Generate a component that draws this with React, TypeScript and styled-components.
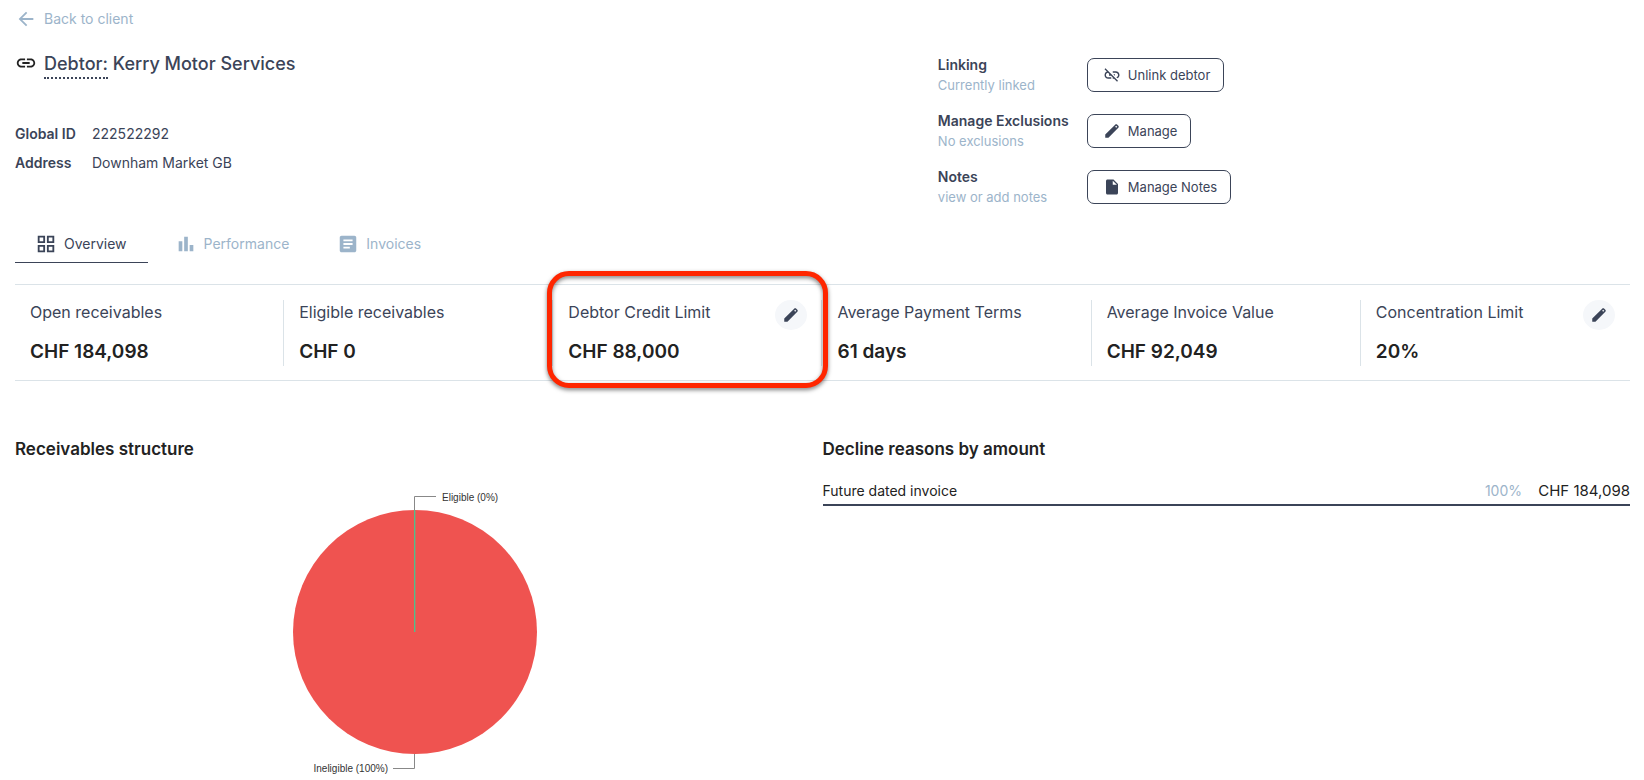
import React from 'react';
import styled, { createGlobalStyle, css } from 'styled-components';
import {
  MdArrowBack,
  MdArticle,
  MdBarChart,
  MdGridView,
  MdInsertDriveFile,
  MdLink,
  MdLinkOff,
} from 'react-icons/md';

const colors = {
  ink: '#3b4458',
  strong: '#222222',
  muted: '#9cb4ca',
  line: '#dbe3e8',
  soft: '#f5f7fa',
  highlight: '#ff2600',
  danger: '#ef5350',
};

const GlobalStyle = createGlobalStyle`
  * { box-sizing: border-box; }
  body {
    margin: 0;
    background: #ffffff;
    color: ${colors.ink};
    font-family: Inter, "Liberation Sans", sans-serif;
    font-size: 14px;
    line-height: 20px;
  }
  button { font: inherit; color: inherit; cursor: pointer; }
  h1, h2, p, dl, dd, dt { margin: 0; }
`;

const Page = styled.div`
  padding: 8px 14px 0 15px;
`;

const BackLink = styled.a`
  display: flex;
  align-items: center;
  gap: 7px;
  width: fit-content;
  color: ${colors.muted};
  text-decoration: none;
  svg { width: 22px; height: 22px; }
`;

const Header = styled.header`
  display: grid;
  grid-template-columns: 4fr 3fr;
  margin-top: 20px;
`;

const Title = styled.h1`
  display: flex;
  align-items: flex-start;
  gap: 7px;
  padding-top: 2px;
  font-size: 18px;
  line-height: 24px;
  font-weight: 500;
  svg { width: 22px; height: 22px; color: ${colors.strong}; }
`;

const TitleTerm = styled.span`
  display: inline-block;
  padding-bottom: 1px;
  border-bottom: 2px dotted ${colors.ink};
`;

const Details = styled.dl`
  display: grid;
  grid-template-columns: 62px 1fr;
  column-gap: 15px;
  row-gap: 9px;
  margin-top: 45px;
  white-space: nowrap;
  dt { font-weight: 600; }
`;

const Actions = styled.div`
  display: grid;
  grid-template-columns: 135px max-content;
  column-gap: 14px;
  row-gap: 14px;
  align-content: start;
  align-items: center;
  padding-top: 4px;
`;

const ActionText = styled.div`
  display: flex;
  flex-direction: column;
  height: 42px;
`;

const ActionName = styled.span`
  font-weight: 600;
  line-height: 22px;
`;

const ActionHint = styled.span`
  font-size: 13px;
  line-height: 18px;
  color: ${colors.muted};
`;

const OutlineButton = styled.button`
  display: inline-flex;
  align-items: center;
  justify-self: start;
  gap: 7px;
  height: 34px;
  padding: 0 13px 0 15px;
  border: 1px solid ${colors.ink};
  border-radius: 7px;
  background: #ffffff;
  font-size: 13px;
  svg { width: 18px; height: 18px; }
`;

const Tabs = styled.nav`
  display: flex;
  gap: 7px;
  margin-top: 17px;
`;

const Tab = styled.button<{ $active?: boolean }>`
  display: flex;
  align-items: center;
  gap: 7px;
  height: 38px;
  padding: 0 21px 0 20px;
  border: 0;
  border-bottom: 1px solid transparent;
  background: none;
  color: ${colors.muted};
  svg { width: 22px; height: 22px; }
  ${({ $active }) => $active && css`
    border-bottom-color: ${colors.ink};
    color: ${colors.ink};
  `}
`;

const Stats = styled.section`
  display: grid;
  grid-template-columns: repeat(6, 1fr);
  margin-top: 21px;
  padding: 15px 0 14px;
  border-top: 1px solid ${colors.line};
  border-bottom: 1px solid ${colors.line};
`;

const Stat = styled.div`
  position: relative;
  display: flex;
  align-items: flex-start;
  justify-content: space-between;
  height: 66px;
  padding: 0 14px 0 15px;
  border-right: 1px solid ${colors.line};
  &:last-child { border-right-color: transparent; }
`;

const StatLabel = styled.p`
  font-size: 16px;
  line-height: 24px;
`;

const StatValue = styled.p`
  margin-top: 15px;
  font-size: 19px;
  line-height: 26px;
  font-weight: 600;
  color: ${colors.strong};
`;

const RoundButton = styled.button`
  display: grid;
  place-items: center;
  width: 32px;
  height: 30px;
  padding: 0;
  border: 0;
  border-radius: 50%;
  background: ${colors.soft};
  svg { width: 18px; height: 18px; }
`;

const Highlight = styled.span`
  position: absolute;
  inset: -29px -7px -22px -6px;
  border: 5px solid ${colors.highlight};
  border-radius: 22px;
  filter: drop-shadow(0 2px 2px rgba(0, 0, 0, 0.5));
  pointer-events: none;
`;

const Panels = styled.div`
  display: grid;
  grid-template-columns: 1fr 1fr;
  margin-top: 56px;
`;

const PanelTitle = styled.h2`
  font-size: 17px;
  line-height: 24px;
  font-weight: 600;
  color: ${colors.strong};
`;

const Chart = styled.svg`
  display: block;
  width: 800px;
  max-width: 100%;
  margin-top: 19px;
  text {
    font-family: "Liberation Sans", Arial, sans-serif;
    font-size: 10px;
    fill: #333333;
  }
`;

const Reasons = styled.table`
  width: 100%;
  margin-top: 18px;
  border-collapse: collapse;
  color: ${colors.strong};
  tr { border-bottom: 2px solid ${colors.ink}; }
  td { padding: 2px 0 3px; }
`;

const Share = styled.td`
  text-align: right;
  color: ${colors.muted};
`;

const Amount = styled.td`
  width: 108px;
  font-size: 15px;
  text-align: right;
`;

function PencilIcon() {
  return (
    <svg viewBox="0 0 24 24" fill="currentColor" aria-hidden="true">
      <path d="M3 21v-4.250L16.200 3.575q.3-.275.663-.425t.762-.15t.775.15t.65.45L20.425 5q.3.275.438.65T21 6.400q0 .4-.137.763t-.438.662L7.250 21zM17.600 7.800L19 6.400L17.600 5l-1.400 1.400z" />
    </svg>
  );
}

const actions = [
  { name: 'Linking', hint: 'Currently linked', button: 'Unlink debtor', Icon: MdLinkOff },
  { name: 'Manage Exclusions', hint: 'No exclusions', button: 'Manage', Icon: PencilIcon },
  { name: 'Notes', hint: 'view or add notes', button: 'Manage Notes', Icon: MdInsertDriveFile },
];

const tabs = [
  { label: 'Overview', Icon: MdGridView, active: true },
  { label: 'Performance', Icon: MdBarChart },
  { label: 'Invoices', Icon: MdArticle },
];

const stats = [
  { label: 'Open receivables', value: 'CHF 184,098' },
  { label: 'Eligible receivables', value: 'CHF 0' },
  { label: 'Debtor Credit Limit', value: 'CHF 88,000', editable: true, highlighted: true },
  { label: 'Average Payment Terms', value: '61 days' },
  { label: 'Average Invoice Value', value: 'CHF 92,049' },
  { label: 'Concentration Limit', value: '20%', editable: true },
];

function ReceivablesChart() {
  return (
    <Chart viewBox="0 0 800 304" role="img" aria-label="Receivables structure">
      <circle cx="400" cy="152" r="122" fill={colors.danger} />
      <path d="M399.5 30V152" stroke="#4fc08a" />
      <path d="M400.5 30V152" stroke="#b57a68" />
      <path d="M399.5 30V16.500H421M399.5 274V288.500H378" fill="none" stroke="#888888" />
      <text x="427" y="21">Eligible (0%)</text>
      <text x="373" y="292" textAnchor="end">Ineligible (100%)</text>
    </Chart>
  );
}

export default function App() {
  return (
    <Page>
      <GlobalStyle />
      <BackLink href="#client">
        <MdArrowBack />
        Back to client
      </BackLink>

      <Header>
        <div>
          <Title>
            <MdLink />
            <span>
              <TitleTerm>Debtor:</TitleTerm> Kerry Motor Services
            </span>
          </Title>
          <Details>
            <dt>Global ID</dt>
            <dd>222522292</dd>
            <dt>Address</dt>
            <dd>Downham Market GB</dd>
          </Details>
        </div>
        <Actions>
          {actions.map(({ name, hint, button, Icon }) => (
            <React.Fragment key={name}>
              <ActionText>
                <ActionName>{name}</ActionName>
                <ActionHint>{hint}</ActionHint>
              </ActionText>
              <OutlineButton type="button">
                <Icon />
                {button}
              </OutlineButton>
            </React.Fragment>
          ))}
        </Actions>
      </Header>

      <Tabs>
        {tabs.map(({ label, Icon, active }) => (
          <Tab key={label} type="button" $active={active}>
            <Icon />
            {label}
          </Tab>
        ))}
      </Tabs>

      <Stats>
        {stats.map(({ label, value, editable, highlighted }) => (
          <Stat key={label}>
            <div>
              <StatLabel>{label}</StatLabel>
              <StatValue>{value}</StatValue>
            </div>
            {editable && (
              <RoundButton type="button" aria-label={`Edit ${label}`}>
                <PencilIcon />
              </RoundButton>
            )}
            {highlighted && <Highlight />}
          </Stat>
        ))}
      </Stats>

      <Panels>
        <section>
          <PanelTitle>Receivables structure</PanelTitle>
          <ReceivablesChart />
        </section>
        <section>
          <PanelTitle>Decline reasons by amount</PanelTitle>
          <Reasons>
            <tbody>
              <tr>
                <td>Future dated invoice</td>
                <Share>100%</Share>
                <Amount>CHF 184,098</Amount>
              </tr>
            </tbody>
          </Reasons>
        </section>
      </Panels>
    </Page>
  );
}
